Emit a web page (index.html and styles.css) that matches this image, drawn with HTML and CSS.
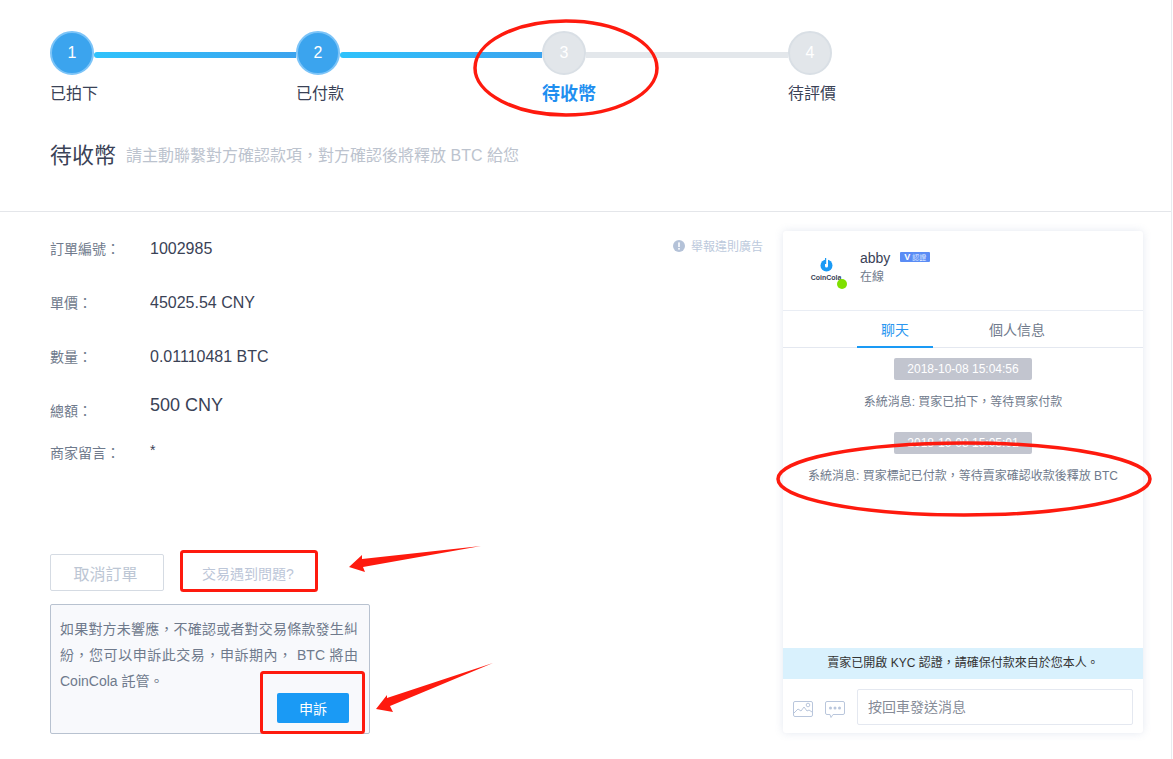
FILE: index.html
```html
<!DOCTYPE html>
<html lang="zh-Hant">
<head>
    <meta charset="UTF-8">
    <meta name="viewport" content="width=device-width, initial-scale=1.0">
    <title>待收幣</title>
    <link rel="stylesheet" href="styles.css">
</head>
<body>
    <div class="page">
        <header class="top">
            <div class="steps">
                <div class="step done">
                    <div class="step-track"><span class="step-num">1</span><span class="step-bar"></span></div>
                    <div class="step-label">已拍下</div>
                </div>
                <div class="step done">
                    <div class="step-track"><span class="step-num">2</span><span class="step-bar"></span></div>
                    <div class="step-label">已付款</div>
                </div>
                <div class="step active">
                    <div class="step-track"><span class="step-num">3</span><span class="step-bar"></span></div>
                    <div class="step-label">待收幣</div>
                </div>
                <div class="step last">
                    <div class="step-track"><span class="step-num">4</span></div>
                    <div class="step-label">待評價</div>
                </div>
            </div>
            <div class="title-row">
                <h1>待收幣</h1>
                <span class="title-note">請主動聯繫對方確認款項，對方確認後將釋放 BTC 給您</span>
            </div>
        </header>

        <main class="main">
            <section class="order">
                <div class="order-head">
                    <div class="order-list">
                        <div class="row"><span class="row-label">訂單編號：</span><span class="row-value">1002985</span></div>
                        <div class="row"><span class="row-label">單價：</span><span class="row-value">45025.54 CNY</span></div>
                        <div class="row"><span class="row-label">數量：</span><span class="row-value">0.01110481 BTC</span></div>
                        <div class="row"><span class="row-label">總額：</span><span class="row-value total">500 CNY</span></div>
                        <div class="row short"><span class="row-label">商家留言：</span><span class="row-value note">*</span></div>
                    </div>
                    <a class="report">
                        <svg width="12" height="12" viewBox="0 0 12 12"><circle cx="6" cy="6" r="6" fill="#b4c2d8"/><rect x="5.200" y="2.400" width="1.600" height="4.600" fill="#fff"/><rect x="5.200" y="8" width="1.600" height="1.600" fill="#fff"/></svg>
                        舉報違則廣告
                    </a>
                </div>
                <div class="actions">
                    <button class="btn-cancel">取消訂單</button>
                    <a class="problem-link">交易遇到問題?</a>
                </div>
                <div class="appeal">
                    <p>如果對方未響應，不確認或者對交易條款發生糾紛，您可以申訴此交易，申訴期內， BTC 將由 CoinCola 託管。</p>
                    <div class="appeal-foot"><button class="btn-appeal">申訴</button></div>
                </div>
            </section>

            <aside class="chat">
                <div class="chat-head">
                    <div class="avatar">
                        <svg width="13" height="14" viewBox="0 0 13 14"><circle cx="6.500" cy="7.500" r="6" fill="#1a9af5"/><rect x="5" y="0" width="3" height="9.500" rx="1.500" fill="#fff"/><rect x="5" y="0" width="1.200" height="6" fill="#1a9af5"/></svg>
                        <span class="avatar-name">CoinCola</span>
                        <span class="online-dot"></span>
                    </div>
                    <div class="chat-user">
                        <div class="user-name">abby <span class="badge"><b class="badge-v">V</b> 認證</span></div>
                        <div class="user-state">在線</div>
                    </div>
                </div>
                <div class="tabs">
                    <div class="tab on">聊天</div>
                    <div class="tab">個人信息</div>
                </div>
                <div class="messages">
                    <div class="msg-time">2018-10-08 15:04:56</div>
                    <div class="msg-text">系統消息: 買家已拍下，等待買家付款</div>
                    <div class="msg-time">2018-10-08 15:05:01</div>
                    <div class="msg-text">系統消息: 買家標記已付款，等待賣家確認收款後釋放 BTC</div>
                </div>
                <div class="kyc">賣家已開啟 KYC 認證，請確保付款來自於您本人。</div>
                <div class="chat-foot">
                    <svg class="foot-icon" width="20" height="16" viewBox="0 0 20 16" fill="none" stroke="#b9c6dc"><rect x="0.500" y="0.500" width="19" height="15" rx="1.500"/><path d="M1 12l4-4 3 2 3-4 3 4 2-1 3 2"/><circle cx="15" cy="4" r="1.800"/></svg>
                    <svg class="foot-icon" width="20" height="17" viewBox="0 0 20 17" fill="none" stroke="#b9c6dc"><path d="M2 .5h16A1.500 1.500 0 0 1 19.500 2v10a1.500 1.500 0 0 1-1.500 1.500H8l-2 3-1-3H2A1.500 1.500 0 0 1 .5 12V2A1.500 1.500 0 0 1 2 .5z"/><circle cx="5.500" cy="7" r="1.500" fill="#b9c6dc" stroke="none"/><circle cx="10" cy="7" r="1.500" fill="#b9c6dc" stroke="none"/><circle cx="14.500" cy="7" r="1.500" fill="#b9c6dc" stroke="none"/></svg>
                    <input class="chat-input" type="text" placeholder="按回車發送消息">
                </div>
            </aside>
        </main>

        <!-- red marks drawn over the screenshot -->
        <svg class="marks" width="1173" height="759" viewBox="0 0 1173 759" fill="none" stroke="#fe1a0e">
            <ellipse cx="566" cy="68" rx="91" ry="47" stroke-width="3.500"/>
            <ellipse cx="964" cy="479" rx="186" ry="36" stroke-width="3.500"/>
            <rect x="181.500" y="551.500" width="135" height="39" rx="2" stroke-width="3"/>
            <rect x="261.500" y="672.500" width="102" height="60" rx="2" stroke-width="3"/>
            <polygon points="481,546 362,559 362,555 349,567 365,572 363,567" fill="#fe1a0e" stroke="none"/>
            <polygon points="493,663 387,698 387,695 376,709 393,712 390,706" fill="#fe1a0e" stroke="none"/>
        </svg>
    </div>
</body>
</html>
```

FILE: styles.css
```css
* {
    box-sizing: border-box;
}
body {
    margin: 0;
    background-color: #fff;
    font-family: "Liberation Sans", "Noto Sans CJK TC", sans-serif;
    color: #3a4256;
}
.page {
    position: relative;
    width: 1172px;
    height: 759px;
    overflow: hidden;
    border-right: 1px solid #e8ebef;
}
.top {
    height: 212px;
    padding: 31px 0 0 50px;
    border-bottom: 1px solid #e4e6ea;
}
.steps {
    display: flex;
}
.step {
    width: 246px;
}
.step-track {
    display: flex;
}
.step-num {
    flex: none;
    display: flex;
    align-items: center;
    justify-content: center;
    width: 44px;
    height: 44px;
    border-radius: 50%;
    background-color: #e2e6ea;
    border: 2px solid #d9dfe5;
    color: #fff;
    font-size: 16px;
}
.step-bar {
    flex: 1;
    height: 6px;
    margin-top: 21px;
    background-color: #e3e7eb;
}
.step.done .step-num {
    background-color: #3ba4ee;
    border-color: #7cc4f8;
}
.step.done .step-bar {
    background: linear-gradient(to right, #2fc2fb, #3ba3ee);
    border-radius: 3px 0 0 3px;
}
.step-label {
    margin-top: 7px;
    font-size: 16px;
    line-height: 24px;
}
.step.active .step-label {
    padding-top: 1px;
    font-size: 18px;
    font-weight: bold;
    line-height: 23px;
    color: #1f8ff0;
}
.title-row {
    display: flex;
    align-items: center;
    height: 30px;
    margin-top: 33px;
}
h1 {
    margin: 0 10px 0 0;
    padding-bottom: 3px;
    font-size: 22px;
    font-weight: normal;
}
.title-note {
    font-size: 16px;
    color: #bcc3ce;
}
.main {
    display: flex;
    align-items: flex-start;
}
.order {
    width: 763px;
    padding: 9px 0 0 50px;
}
.order-head {
    display: flex;
    justify-content: space-between;
    align-items: flex-start;
}
.row {
    display: flex;
    align-items: center;
    height: 54px;
}
.row.short {
    height: 30px;
}
.row-label {
    width: 100px;
    font-size: 14px;
    color: #6f7a8c;
}
.row-value {
    padding-top: 1px;
    font-size: 16px;
}
.row-value.total {
    padding: 0 0 10px;
    font-size: 18px;
}
.row-value.note {
    padding: 0 0 4px;
    font-size: 14px;
    color: #3a4256;
}
.report {
    display: flex;
    align-items: center;
    gap: 6px;
    margin-top: 16px;
    font-size: 12px;
    color: #bcc9dc;
}
.actions {
    display: flex;
    align-items: center;
    margin-top: 87px;
}
.btn-cancel {
    width: 114px;
    height: 37px;
    padding: 0 3px 0 0;
    background-color: #fff;
    border: 1px solid #d5dbe3;
    border-radius: 2px;
    color: #bcc6d4;
    font-family: inherit;
    font-size: 16px;
}
.problem-link {
    margin-left: 38px;
    font-size: 14px;
    color: #bcc6d8;
}
.appeal {
    width: 320px;
    height: 130px;
    margin-top: 13px;
    padding: 11px 11px 10px 9px;
    background-color: #f8f9fc;
    border: 1px solid #b8c2d0;
    border-radius: 2px;
}
.appeal p {
    height: 77px;
    margin: 0;
    font-size: 14px;
    line-height: 26px;
    color: #6f7a8c;
    text-align: justify;
}
.appeal-foot {
    display: flex;
    justify-content: flex-end;
    padding-right: 9px;
}
.btn-appeal {
    width: 72px;
    height: 30px;
    padding: 0;
    background-color: #1a9af5;
    border: none;
    border-radius: 2px;
    color: #fff;
    font-family: inherit;
    font-size: 14px;
}
.chat {
    display: flex;
    flex-direction: column;
    width: 360px;
    height: 502px;
    margin: 19px 0 0 20px;
    background-color: #fff;
    border-radius: 3px;
    box-shadow: 0 0 8px rgba(120, 140, 180, 0.2);
}
.chat-head {
    display: flex;
    align-items: center;
    gap: 14px;
    height: 80px;
    padding: 0 0 6px 23px;
    border-bottom: 1px solid #e9edf4;
}
.avatar {
    position: relative;
    display: flex;
    flex-direction: column;
    align-items: center;
    width: 40px;
    margin-top: 5px;
}
.avatar-name {
    margin-top: 1px;
    font-size: 7px;
    font-weight: bold;
    line-height: 10px;
    color: #3a4256;
}
.online-dot {
    position: absolute;
    right: -1px;
    bottom: -6px;
    width: 10px;
    height: 10px;
    border-radius: 50%;
    background-color: #7fe000;
}
.user-name {
    font-size: 14px;
    line-height: 18px;
}
.badge {
    display: inline-block;
    width: 30px;
    height: 10px;
    margin-left: 6px;
    background-color: #5a8cf5;
    border-radius: 1px;
    color: #dbe6ff;
    font-size: 7px;
    line-height: 10px;
    text-align: center;
    vertical-align: 3px;
}
.badge-v {
    color: #fff;
    font-size: 9px;
}
.user-state {
    margin-top: 1px;
    font-size: 12px;
    line-height: 18px;
    color: #6f7a8c;
}
.tabs {
    display: flex;
    gap: 32px;
    height: 37px;
    padding-left: 74px;
    border-bottom: 1px solid #e4e8f0;
}
.tab {
    height: 37px;
    padding: 1px 24px 0;
    font-size: 14px;
    line-height: 37px;
    color: #6f7a8c;
}
.tab.on {
    border-bottom: 2px solid #1a9af5;
    color: #2a96f0;
}
.messages {
    flex: 1;
    display: flex;
    flex-direction: column;
    align-items: center;
    padding-top: 10px;
}
.msg-time {
    width: 138px;
    height: 22px;
    background-color: #c2c5cf;
    border-radius: 2px;
    color: #fff;
    font-size: 12px;
    line-height: 22px;
    text-align: center;
}
.msg-text {
    margin: 13px 0 21px;
    font-size: 12px;
    line-height: 18px;
    color: #6f7a8c;
}
.kyc {
    height: 31px;
    background-color: #d9f1fd;
    font-size: 12px;
    line-height: 31px;
    color: #333;
    text-align: center;
}
.chat-foot {
    display: flex;
    align-items: flex-start;
    height: 54px;
    padding: 10px 10px 0 10px;
}
.foot-icon {
    flex: none;
    margin: 12px 12px 0 0;
}
.chat-input {
    width: 276px;
    height: 36px;
    padding: 0 10px;
    border: 1px solid #e4e8f0;
    border-radius: 2px;
    font-family: inherit;
    font-size: 14px;
}
.chat-input::placeholder {
    color: #868c98;
}
.marks {
    position: absolute;
    top: 0;
    left: 0;
    pointer-events: none;
}
```
